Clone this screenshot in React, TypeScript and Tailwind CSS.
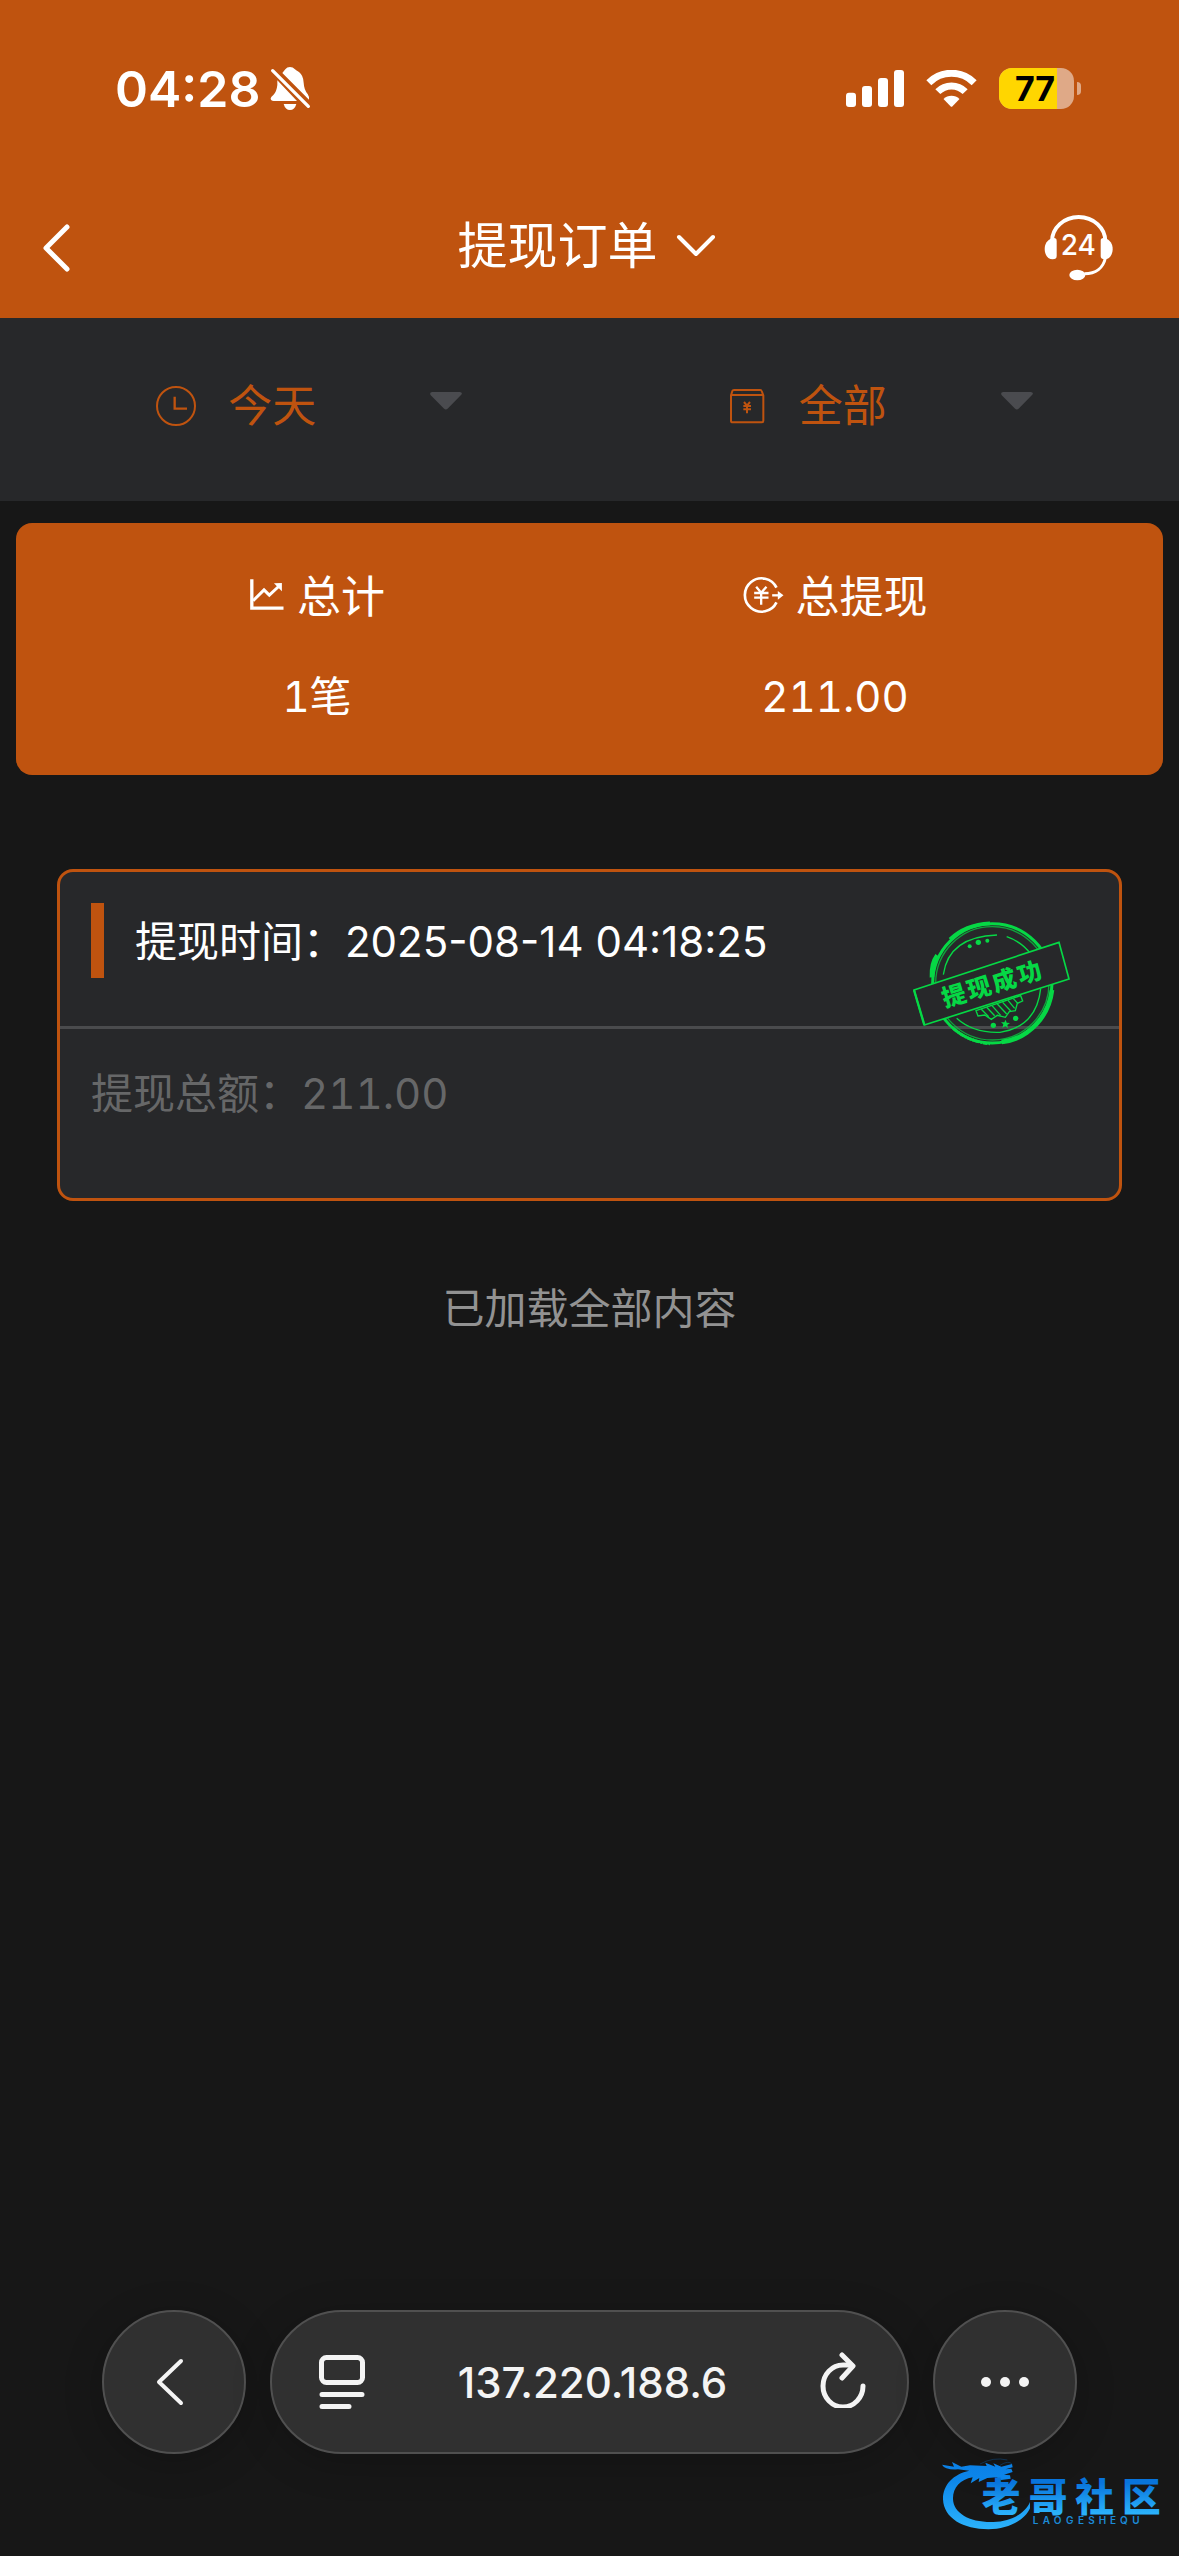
import React from 'react';

function BellOff() {
  return (
    <svg aria-hidden="true" className="h-[45px] w-[41px]" viewBox="543 78 123 135" fill="#fff">
      <path d="M565 121 L624 183 H554 Q545 183 545 175 Q546 170 553 165 Q563 155 565 135Z" />
      <path d="M580 99 Q586 92 589 88 Q594 81 603 81 Q612 81 617 87 Q622 91 630 96 Q643 106 644 128 Q645 149 656 162 Q661 169 660 179Z" />
      <path d="M584 192 H622 Q617 210 603 210 Q589 210 584 192Z" />
      <path d="M551 92 L658 199" stroke="#fff" strokeWidth="10" strokeLinecap="round" />
    </svg>
  );
}

function Signal() {
  return (
    <svg aria-hidden="true" className="h-[37px] w-[58px]" viewBox="78 87 174 111" fill="#fff">
      <rect x="78" y="155" width="30" height="43" rx="9" />
      <rect x="126" y="135" width="30" height="63" rx="9" />
      <rect x="174" y="111" width="30" height="87" rx="9" />
      <rect x="222" y="87" width="30" height="111" rx="9" />
    </svg>
  );
}

function Wifi() {
  return (
    <svg aria-hidden="true" className="h-[37px] w-[51px]" viewBox="319 87 152 111" fill="none">
      <path d="M327 125 A96 96 0 0 1 463 125" stroke="#fff" strokeWidth="21" />
      <path d="M354 152 A57.5 57.5 0 0 1 436 152" stroke="#fff" strokeWidth="21" />
      <path d="M371 174 A34 34 0 0 1 419 174 L398 196 Q395 199 392 196Z" fill="#fff" />
    </svg>
  );
}

function Battery() {
  return (
    <div className="flex items-center gap-[3px]" role="img" aria-label="77%">
      <div className="relative flex h-[41px] w-[75px] items-center justify-center overflow-hidden rounded-[13px] bg-[#dfa987] pr-[3px]">
        <div className="absolute inset-y-0 left-0 w-[58px] bg-[#ffd600]" />
        <span className="relative text-[34px] leading-[41px] font-bold text-black">77</span>
      </div>
      <div className="h-[13px] w-1 rounded-r-full bg-[#dfa987]" />
    </div>
  );
}

function Headset() {
  return (
    <svg aria-hidden="true" className="h-[67px] w-[70px]" viewBox="72 42 210 201" fill="#fff">
      <path d="M96 124 A80 73 0 0 1 256 124" fill="none" stroke="#fff" strokeWidth="12" />
      <path d="M110 123 Q110 112 97 115 C82 119 74 132 74 147 C74 165 84 178 98 178 Q110 178 110 168Z" />
      <path d="M242 123 Q242 112 255 115 C270 119 278 132 278 147 C278 165 268 178 254 178 Q242 178 242 168Z" />
      <path d="M256 174 C250 203 228 221 193 221" fill="none" stroke="#fff" strokeWidth="9" />
      <ellipse cx="172" cy="225" rx="24" ry="16" />
      <text x="175" y="165" textAnchor="middle" className="text-[84px] font-medium">24</text>
    </svg>
  );
}

function ClockIcon() {
  return (
    <svg aria-hidden="true" className="size-10 shrink-0" viewBox="42 46 120 120" fill="none" stroke="#bf530f">
      <circle cx="102" cy="106" r="57" strokeWidth="6" />
      <path d="M98 78 V114 H135" strokeWidth="7" />
    </svg>
  );
}

function MoneyBoxIcon() {
  return (
    <svg aria-hidden="true" className="size-10 shrink-0" viewBox="42 46 120 120" fill="none" stroke="#bf530f" strokeWidth="6">
      <path d="M54 74 L58 61 Q59 58 63 58 H142 Q145 58 146 61 L151 74 V150 Q151 155 146 155 H59 Q54 155 54 150Z" />
      <path d="M54 73 H151" />
      <path d="M93 94 L102 105 L111 94 M91 106 H114 M91 116 H114 M102 104 V128" />
    </svg>
  );
}

function ChartIcon() {
  return (
    <svg aria-hidden="true" className="mb-[6px] h-[33px] w-[36px]" viewBox="330 620 108 100" fill="none" stroke="#fff">
      <path d="M338 624 V711 H434" strokeWidth="10" />
      <path d="M342 689 L375 656 L391 672 L420 645" strokeWidth="9" />
      <path d="M405 636 L429 635 V660Z" fill="#fff" stroke="none" />
    </svg>
  );
}

function YuanOutIcon() {
  return (
    <svg aria-hidden="true" className="mb-1 h-[38px] w-[41px]" viewBox="103 618 122 114" fill="none" stroke="#fff">
      <path d="M203 653 A50 50 0 1 0 203 697" strokeWidth="8" />
      <path d="M142 650 L157 668 L173 650 M136 669 H179 M136 683 H179 M157 668 V704" strokeWidth="7" />
      <path d="M190 676 H210" strokeWidth="7" />
      <path d="M207 663 L224 676 L207 689Z" fill="#fff" stroke="none" />
    </svg>
  );
}

function Stamp() {
  return (
    <svg
      role="img"
      aria-label="提现成功"
      className="absolute top-[49px] right-12 h-[125px] w-[158px]"
      viewBox="69 63 474 375"
      fill="none"
      stroke="#06d845"
    >
      <circle cx="307" cy="250" r="179" strokeWidth="9" />
      <circle cx="307" cy="250" r="170" strokeWidth="4" opacity="0.7" />
      <path d="M126 232 Q124 190 142 166" strokeWidth="14" />
      <path d="M180 118 Q225 74 300 70" strokeWidth="11" />
      <path d="M486 270 Q476 350 410 398 Q380 420 335 426" strokeWidth="14" />
      <path d="M190 385 Q235 425 300 431" strokeWidth="9" strokeDasharray="14 3 6 2" />
      <path d="M160 224 Q176 110 321 105 M350 110 Q395 125 425 165 M452 266 Q440 380 330 397 Q250 400 200 355" strokeWidth="4" />
      <path d="M72 270 L507 127 L537 237 L103 375Z" fill="#27282a" strokeWidth="5" />
      <path d="M72 270 L103 375" strokeWidth="7" />
      <path d="M258 332 L264 348 L284 345 L304 358 L322 346 L346 352 L358 335 L376 332 L382 310 L398 303 L392 287Z" strokeWidth="4" />
      <path d="M274 328 L296 350 M290 322 L314 347 M306 317 L332 346 M322 312 L350 342 M338 307 L362 333 M354 301 L374 325 M370 296 L384 311" strokeWidth="4" />
      <g fill="#06d845" stroke="none">
        <circle cx="239" cy="139" r="6" />
        <circle cx="265" cy="127" r="8" />
        <circle cx="292" cy="122" r="6" />
        <circle cx="310" cy="376" r="8" />
        <path d="M347 359 L350 368 L360 369 L352 375 L354 384 L346 379 L337 383 L340 373 L333 367 L343 367Z" />
        <circle cx="377" cy="355" r="8" />
        <g transform="rotate(-17 307 251)">
          <text x="150 229 308 387" y="278" className="font-['Noto_Sans_CJK_SC',sans-serif] text-[72px] font-black">
            提现成功
          </text>
        </g>
      </g>
    </svg>
  );
}

function Watermark() {
  return (
    <svg
      role="img"
      aria-label="老哥社区 LAOGESHEQU"
      className="pointer-events-none absolute right-0 bottom-[6px] h-[100px] w-[249px]"
      viewBox="0 0 747 300"
    >
      <defs>
        <linearGradient id="wm" gradientUnits="userSpaceOnUse" x1="0" y1="40" x2="0" y2="235">
          <stop offset="0" stopColor="#0b80e6" />
          <stop offset="0.25" stopColor="#0c86ea" />
          <stop offset="1" stopColor="#2bb2fb" />
        </linearGradient>
        <linearGradient id="wt" gradientUnits="userSpaceOnUse" x1="0" y1="98" x2="0" y2="190">
          <stop offset="0" stopColor="#0874dc" />
          <stop offset="1" stopColor="#2bb2fb" />
        </linearGradient>
      </defs>
      <path
        fill="url(#wm)"
        d="M118 62 C70 72 38 105 39 148 C41 205 100 238 175 238 C235 238 285 210 300 175 V156 C285 190 245 214 190 216 C120 218 70 190 69 147 C68 115 90 88 128 82 L122 100 L148 84 L146 96 L172 84 L200 82 L214 90 L242 86 L240 76 L222 74 L248 66 L244 56 L226 58 L248 52 L246 42 L214 50 L190 40 L196 50 L166 38 L170 48 L120 46 L94 50 L66 36 L72 50 L36 44 Q44 60 84 58Z"
      />
      <path d="M150 42 Q190 20 232 30 M210 46 Q235 30 246 42" fill="none" stroke="#0b5ea8" strokeWidth="2" opacity="0.6" />
      <g fill="url(#wt)">
        <text x="155 296 436 576" y="182" className="font-['Noto_Sans_CJK_SC',sans-serif] text-[116px] font-black">
          老哥社区
        </text>
      </g>
      <text x="308 338 371 408 444 475 506 540 570 607" y="222" fill="#1c8ad6" className="text-[30px] font-semibold">
        LAOGESHEQU
      </text>
    </svg>
  );
}

function Filter({ id, label, icon, options }: { id: string; label: string; icon: React.ReactNode; options: string[] }) {
  return (
    <div className="flex items-center justify-center gap-8">
      <label htmlFor={id} aria-label={label}>{icon}</label>
      <div className="relative">
        <select
          id={id}
          className="block h-[66px] w-[234px] appearance-none bg-transparent text-[44px] leading-[66px] text-[#bf530f] outline-none"
        >
          {options.map((o) => (
            <option key={o}>{o}</option>
          ))}
        </select>
        <svg
          aria-hidden="true"
          className="pointer-events-none absolute top-[19px] right-0 h-[18px] w-8"
          viewBox="864 66 97 54"
          fill="#4a4b4f"
        >
          <path d="M871 66 H954 Q965 68 958 75 L918 116 Q912 122 906 116 L867 76 Q860 68 871 66Z" />
        </svg>
      </div>
    </div>
  );
}

function Stat({ icon, label, value }: { icon: React.ReactNode; label: string; value: string }) {
  return (
    <div className="flex flex-col items-center gap-[34px] leading-[66px]">
      <div className="flex items-center gap-3 text-[44px]">
        {icon}
        <span>{label}</span>
      </div>
      <span className="text-[42px] tabular-nums">{value}</span>
    </div>
  );
}

const glass = 'flex h-36 items-center rounded-full border-2 border-[#505050] bg-[#303030] shadow-[0_8px_40px_rgba(0,0,0,0.2)]';

export default function App() {
  return (
    <div className="relative flex min-h-screen flex-col bg-[#171717] font-['Inter','Noto_Sans_CJK_SC',sans-serif] text-white">
      <header className="bg-[#bf530f]">
        <div className="flex h-[177px] items-center justify-between pr-[98px] pl-[115px]">
          <div className="flex items-center gap-[10px]">
            <span className="text-[50px] leading-[60px] font-semibold">04:28</span>
            <BellOff />
          </div>
          <div className="flex items-center gap-[22px]">
            <Signal />
            <Wifi />
            <Battery />
          </div>
        </div>
        <div className="grid h-[141px] grid-cols-[1fr_auto_1fr] items-center">
          <button type="button" aria-label="返回" className="ml-10 justify-self-start">
            <svg className="h-[54px] w-8" viewBox="0 0 32 54" fill="none" stroke="#fff" strokeWidth="5" strokeLinecap="round" strokeLinejoin="round">
              <path d="M27 6 L6 27 L27 48" />
            </svg>
          </button>
          <button type="button" aria-haspopup="listbox" className="flex items-center gap-[18px] pr-[6px] pb-1 text-[50px] leading-[72px]">
            提现订单
            <svg aria-hidden="true" className="h-6 w-10" viewBox="0 0 40 24" fill="none" stroke="#fff" strokeWidth="4" strokeLinecap="round" strokeLinejoin="round">
              <path d="M3 3 L20 20 L37 3" />
            </svg>
          </button>
          <button type="button" aria-label="24小时客服" className="mr-[65px] justify-self-end">
            <Headset />
          </button>
        </div>
      </header>

      <section className="grid grid-cols-2 bg-[#27282a] pt-[55px] pr-[14px] pb-[62px] pl-6">
        <Filter id="date" label="日期" icon={<ClockIcon />} options={['今天', '昨天']} />
        <Filter id="type" label="类型" icon={<MoneyBoxIcon />} options={['全部']} />
      </section>

      <section className="mx-4 mt-[22px] grid grid-cols-2 rounded-2xl bg-[#bf530f] pt-[41px] pr-[69px] pb-[45px] pl-[42px]">
        <Stat icon={<ChartIcon />} label="总计" value="1笔" />
        <Stat icon={<YuanOutIcon />} label="总提现" value="211.00" />
      </section>

      <main className="mx-[57px] mt-[94px] text-[42px] leading-[63px]">
        <article className="relative rounded-2xl border-3 border-[#bf530f] bg-[#27282a]">
          <div className="flex items-center gap-[31px] border-b-3 border-[#4a4b4d] pt-[31px] pb-12 pl-[31px]">
            <span className="h-[75px] w-[13px] bg-[#bf530f]" />
            <span className="pt-[2px]">提现时间：2025-08-14 04:18:25</span>
          </div>
          <p className="px-[31px] pt-[33px] pb-[73px] text-[#666768] tabular-nums">提现总额：211.00</p>
          <Stamp />
        </article>
        <p className="mt-[76px] text-center text-[#929292]">已加载全部内容</p>
      </main>

      <nav className="mt-auto flex gap-6 px-[102px] pb-[102px]">
        <button type="button" aria-label="后退" className={`${glass} w-36 shrink-0 justify-center`}>
          <svg className="mr-2 h-[50px] w-8" viewBox="0 0 32 50" fill="none" stroke="#f4f4f4" strokeWidth="4" strokeLinecap="round" strokeLinejoin="round">
            <path d="M27 4 L5 25 L27 46" />
          </svg>
        </button>
        <div className={`${glass} flex-1 justify-between pr-[41px] pl-[47px]`}>
          <button type="button" aria-label="页面菜单">
            <svg className="h-[54px] w-[46px]" viewBox="0 0 46 54" fill="none" stroke="#f4f4f4" strokeWidth="5" strokeLinecap="round">
              <rect x="2.5" y="2.5" width="41" height="25" rx="5" />
              <path d="M3 39.5 H43 M3 51.5 H30" />
            </svg>
          </button>
          <span className="text-[42px] leading-[63px] font-medium text-[#f4f4f4]">137.220.188.6</span>
          <button type="button" aria-label="刷新">
            <svg className="mb-1 h-[56px] w-[46px]" viewBox="0 0 46 56" fill="none" stroke="#f4f4f4" strokeWidth="5" strokeLinecap="round" strokeLinejoin="round">
              <path d="M43 34 A20 21 0 1 1 23 13 H31" />
              <path d="M22 3 L33 14 L22 26" />
            </svg>
          </button>
        </div>
        <button type="button" aria-label="更多" className={`${glass} w-36 shrink-0 justify-center gap-[9px]`}>
          <span className="size-[10px] rounded-full bg-[#f4f4f4]" />
          <span className="size-[10px] rounded-full bg-[#f4f4f4]" />
          <span className="size-[10px] rounded-full bg-[#f4f4f4]" />
        </button>
      </nav>
      <Watermark />
    </div>
  );
}
